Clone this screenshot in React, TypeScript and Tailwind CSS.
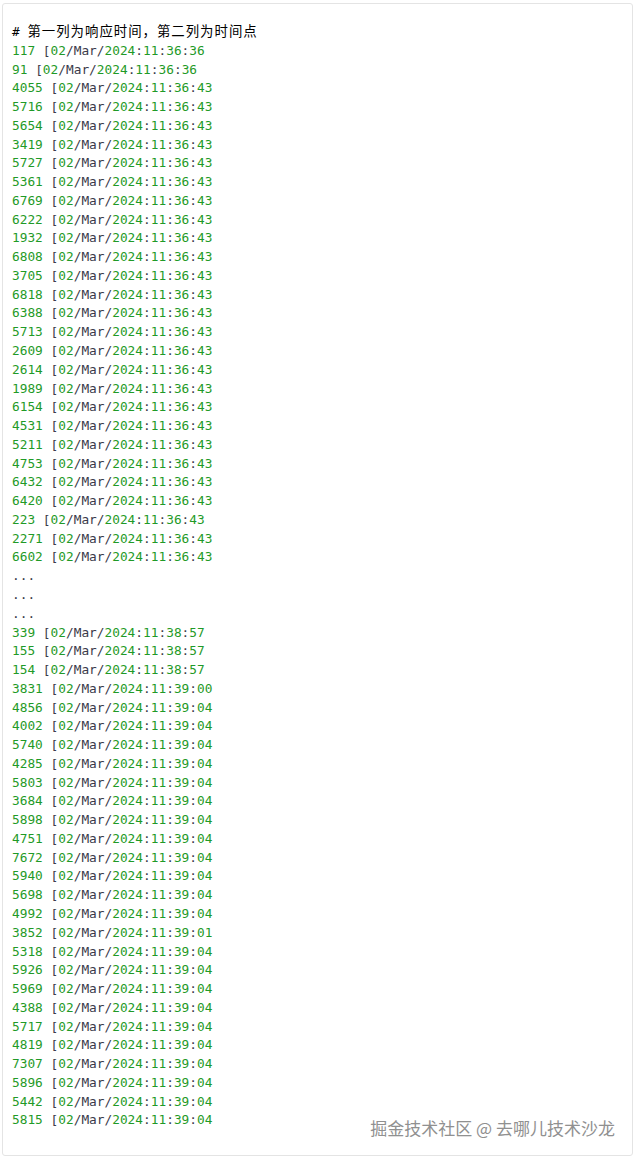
const HEAD: [string, string][] = [
  ["117", "11:36:36"],
  ["91", "11:36:36"],
  ["4055", "11:36:43"],
  ["5716", "11:36:43"],
  ["5654", "11:36:43"],
  ["3419", "11:36:43"],
  ["5727", "11:36:43"],
  ["5361", "11:36:43"],
  ["6769", "11:36:43"],
  ["6222", "11:36:43"],
  ["1932", "11:36:43"],
  ["6808", "11:36:43"],
  ["3705", "11:36:43"],
  ["6818", "11:36:43"],
  ["6388", "11:36:43"],
  ["5713", "11:36:43"],
  ["2609", "11:36:43"],
  ["2614", "11:36:43"],
  ["1989", "11:36:43"],
  ["6154", "11:36:43"],
  ["4531", "11:36:43"],
  ["5211", "11:36:43"],
  ["4753", "11:36:43"],
  ["6432", "11:36:43"],
  ["6420", "11:36:43"],
  ["223", "11:36:43"],
  ["2271", "11:36:43"],
  ["6602", "11:36:43"],
];

const TAIL: [string, string][] = [
  ["339", "11:38:57"],
  ["155", "11:38:57"],
  ["154", "11:38:57"],
  ["3831", "11:39:00"],
  ["4856", "11:39:04"],
  ["4002", "11:39:04"],
  ["5740", "11:39:04"],
  ["4285", "11:39:04"],
  ["5803", "11:39:04"],
  ["3684", "11:39:04"],
  ["5898", "11:39:04"],
  ["4751", "11:39:04"],
  ["7672", "11:39:04"],
  ["5940", "11:39:04"],
  ["5698", "11:39:04"],
  ["4992", "11:39:04"],
  ["3852", "11:39:01"],
  ["5318", "11:39:04"],
  ["5926", "11:39:04"],
  ["5969", "11:39:04"],
  ["4388", "11:39:04"],
  ["5717", "11:39:04"],
  ["4819", "11:39:04"],
  ["7307", "11:39:04"],
  ["5896", "11:39:04"],
  ["5442", "11:39:04"],
  ["5815", "11:39:04"],
];

function N({ children }: { children: string }) {
  return <span className="text-[#1f9a27]">{children}</span>;
}

function LogLine({ ms, time }: { ms: string; time: string }) {
  const [h, m, s] = time.split(":");
  return (
    <div>
      <N>{ms}</N> [<N>02</N>/Mar/<N>2024</N>:<N>{h}</N>:<N>{m}</N>:<N>{s}</N>
    </div>
  );
}

export default function App() {
  return (
    <div className="w-[636px] h-[1159px] bg-white pt-[3px] pl-[2px] pr-[3px] pb-[3px] relative">
      <div className="h-full border border-[#e4e4e4] rounded-[3px] pl-[9px] pt-[17px]">
        <pre className="font-['DejaVu_Sans_Mono','Noto_Sans_CJK_SC',monospace] text-[12.8px] leading-[18.76px] text-[#3a3a4a]">
          <div className="text-black">
            #{" "}
            <span className="text-[13.4px] tracking-[1px] font-['Noto_Sans_CJK_SC',sans-serif]">
              第一列为响应时间，第二列为时间点
            </span>
          </div>
          {HEAD.map(([ms, t], i) => (
            <LogLine key={"h" + i} ms={ms} time={t} />
          ))}
          <div>...</div>
          <div>...</div>
          <div>...</div>
          {TAIL.map(([ms, t], i) => (
            <LogLine key={"t" + i} ms={ms} time={t} />
          ))}
        </pre>
      </div>

      {/* watermark */}
      <div className="absolute right-[21px] bottom-[19px] text-[17px] text-[#909090] font-['Noto_Sans_CJK_SC',sans-serif] [text-shadow:0_0_2px_#fff,1px_1px_1px_#fff]">
        掘金技术社区 @ 去哪儿技术沙龙
      </div>
    </div>
  );
}
